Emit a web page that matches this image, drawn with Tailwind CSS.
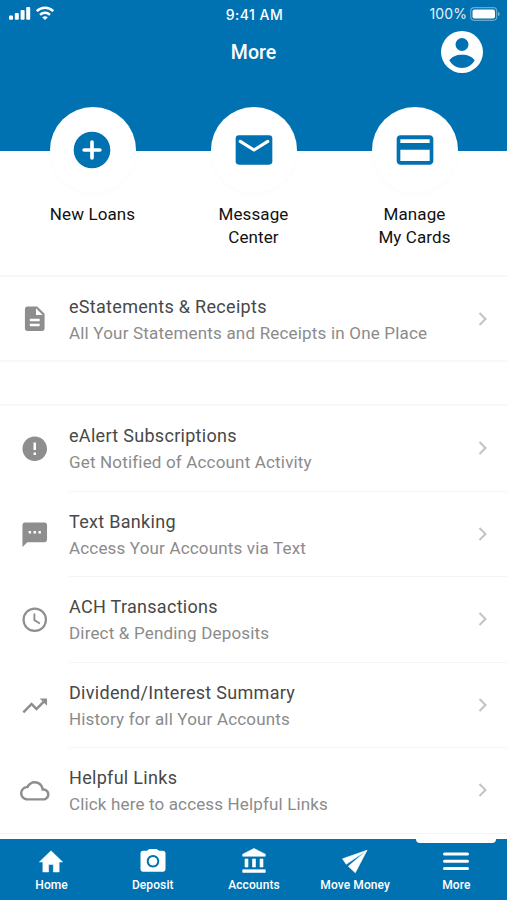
<!DOCTYPE html>
<html lang="en">
<head>
    <meta charset="UTF-8">
    <meta name="viewport" content="width=device-width, initial-scale=1.0">
    <title>More</title>
    <script src="https://cdn.jsdelivr.net/npm/@tailwindcss/browser@4"></script>
</head>
<body class="w-[507px] h-[900px] overflow-hidden bg-white font-['Roboto',sans-serif] flex flex-col">

    <header class="h-[151px] bg-[#0072b1] text-white shrink-0">
        <!-- Status bar -->
        <div class="h-7 grid grid-cols-3 items-center pl-[9px] pr-[7px] font-['Inter',sans-serif] text-[14px]">
            <div class="flex items-center gap-[5px] -mt-[2px]">
                <svg class="w-[22px] h-[14px]" viewBox="0 0 22 14" fill="currentColor">
                    <rect x="0" y="9.5" width="4" height="4.2" rx="1"/>
                    <rect x="5.8" y="7" width="4" height="6.7" rx="1"/>
                    <rect x="11.6" y="4" width="4" height="9.7" rx="1"/>
                    <rect x="17.2" y="1" width="4" height="12.7" rx="1"/>
                </svg>
                <svg class="w-[18px] h-[14px]" viewBox="0 0 18 14" fill="none" stroke="currentColor" stroke-width="2.4">
                    <path d="M.8 5.2C5.4.6 12.6.6 17.2 5.2"/>
                    <path d="M4 8.8c2.8-2.7 7.2-2.7 10 0"/>
                    <path d="M6.2 11.2c1.6-1.4 4-1.4 5.6 0L9 14z" fill="currentColor" stroke="none"/>
                </svg>
            </div>
            <div class="text-center font-medium tracking-[0.5px] whitespace-nowrap">9:41 AM</div>
            <div class="flex items-center justify-end gap-[3px] -mt-[1px]">
                <span class="text-[14px] tracking-[0.1px] opacity-90">100%</span>
                <svg class="w-[30px] h-[14px]" viewBox="0 0 30 14">
                    <rect x=".7" y=".7" width="26" height="12.6" rx="3.5" fill="none" stroke="#fff" stroke-opacity=".4" stroke-width="1.2"/>
                    <rect x="2.5" y="2.5" width="22.5" height="9" rx="2" fill="#fff"/>
                    <path d="M28 5c2 .5 2 3.500 0 4z" fill="#fff" fill-opacity=".5"/>
                </svg>
            </div>
        </div>
        <!-- Title bar -->
        <div class="grid grid-cols-[1fr_auto_1fr] items-center h-[50px]">
            <span></span>
            <h1 class="text-[19.5px] font-medium">More</h1>
            <svg class="w-[42px] h-[42px] justify-self-end mr-6 mt-[-2px]" viewBox="0 0 42 42">
                <circle cx="21" cy="21" r="21" fill="#fff"/>
                <circle cx="21" cy="13.5" r="6.5" fill="#0072b1"/>
                <path d="M8.3 29.5C10.5 25.5 15.5 23.7 21 23.7s10.5 1.8 12.7 5.8C31 34 26.5 37 21 37S11 34 8.3 29.5z" fill="#0072b1"/>
            </svg>
        </div>
    </header>

    <!-- Shortcuts -->
    <section class="grid grid-cols-3 px-[12px] -mt-[44px] h-[168px] shrink-0 text-center text-[17px] leading-[22.5px] tracking-[0.1px] text-[#111]">
        <div class="flex flex-col items-center">
            <div class="w-[86px] h-[86px] rounded-full bg-white flex items-center justify-center shadow-[0_2px_4px_rgba(0,0,0,0.02)]">
                <svg class="w-11 h-11 -ml-px" viewBox="0 0 24 24"><circle cx="12" cy="12" r="10" fill="#0072b1"/><path d="M12 7.7v8.6M7.7 12h8.6" stroke="#fff" stroke-width="2" stroke-linecap="round"/></svg>
            </div>
            <p class="mt-[10px]">New Loans</p>
        </div>
        <div class="flex flex-col items-center">
            <div class="w-[86px] h-[86px] rounded-full bg-white flex items-center justify-center shadow-[0_2px_4px_rgba(0,0,0,0.02)]">
                <svg class="w-11 h-11" viewBox="0 0 24 24"><rect x="2" y="4" width="20" height="16" rx="1.8" fill="#0072b1"/><path d="M4.5 7.3L12 12l7.5-4.7" fill="none" stroke="#fff" stroke-width="1.7" stroke-linecap="round"/></svg>
            </div>
            <p class="mt-[10px]">Message<br>Center</p>
        </div>
        <div class="flex flex-col items-center">
            <div class="w-[86px] h-[86px] rounded-full bg-white flex items-center justify-center shadow-[0_2px_4px_rgba(0,0,0,0.02)]">
                <svg class="w-11 h-11" viewBox="0 0 24 24" fill="#0072b1"><path d="M20 4H4c-1.11 0-1.99.89-1.99 2L2 18c0 1.110.89 2 2 2h16c1.110 0 2-.89 2-2V6c0-1.110-.89-2-2-2zm0 14H4v-6.200h16V18zm0-9.800H4V6.200h16v2z"/></svg>
            </div>
            <p class="mt-[10px]">Manage<br>My Cards</p>
        </div>
    </section>

    <!-- Menu list -->
    <main class="h-[563.5px] shrink-0 text-[18px] tracking-[0.3px] text-[#484848]">
        <a class="flex items-center h-[87px] border-y-2 border-[#f8f8f8] pl-5 pr-5">
            <svg class="w-[29.5px] h-[29.5px] mr-[19.5px]" viewBox="0 0 24 24" fill="#8e8e8e"><path d="M14 2H6c-1.100 0-1.990.9-1.990 2L4 20c0 1.100.89 2 1.990 2H18c1.100 0 2-.9 2-2V8l-6-6zm2 16H8v-2h8v2zm0-4H8v-2h8v2zm-3-5V3.500L18.500 9H13z"/></svg>
            <div class="flex-1 leading-[26px] pt-[3px]">
                <p>eStatements &amp; Receipts</p>
                <p class="text-[17px] tracking-[0.19px] text-[#8b8b8b]">All Your Statements and Receipts in One Place</p>
            </div>
            <svg class="w-[9px] h-[14px]" viewBox="0 0 9 14" fill="none" stroke="#c2c2c2" stroke-width="2"><path d="M1.500 1l6 6-6 6"/></svg>
        </a>
        <div class="h-[44px] border-b-2 border-[#f8f8f8]"></div>
        <a class="flex items-center h-[85.5px] pl-5">
            <svg class="w-[29.5px] h-[29.5px] mr-[19.5px]" viewBox="0 0 24 24" fill="#8e8e8e"><path d="M12 2C6.480 2 2 6.480 2 12s4.480 10 10 10 10-4.480 10-10S17.520 2 12 2zm1 15h-2v-2h2v2zm0-4h-2V7h2v6z"/></svg>
            <div class="flex-1 flex items-center h-full pr-5 border-b border-[#f4f4f4]">
                <div class="flex-1 leading-[26px] pt-[2px]">
                    <p>eAlert Subscriptions</p>
                    <p class="text-[17px] tracking-[0.17px] text-[#8b8b8b]">Get Notified of Account Activity</p>
                </div>
                <svg class="w-[9px] h-[14px]" viewBox="0 0 9 14" fill="none" stroke="#c2c2c2" stroke-width="2"><path d="M1.500 1l6 6-6 6"/></svg>
            </div>
        </a>
        <a class="flex items-center h-[85.5px] pl-5">
            <svg class="w-[29.5px] h-[29.5px] mr-[19.5px]" viewBox="0 0 24 24" fill="#8e8e8e"><path d="M20 2H4c-1.100 0-1.990.9-1.990 2L2 22l4-4h14c1.100 0 2-.9 2-2V4c0-1.100-.9-2-2-2zM9 11H7V9h2v2zm4 0h-2V9h2v2zm4 0h-2V9h2v2z"/></svg>
            <div class="flex-1 flex items-center h-full pr-5 border-b border-[#f4f4f4]">
                <div class="flex-1 leading-[26px] pt-[2px]">
                    <p>Text Banking</p>
                    <p class="text-[17px] tracking-[0.17px] text-[#8b8b8b]">Access Your Accounts via Text</p>
                </div>
                <svg class="w-[9px] h-[14px]" viewBox="0 0 9 14" fill="none" stroke="#c2c2c2" stroke-width="2"><path d="M1.500 1l6 6-6 6"/></svg>
            </div>
        </a>
        <a class="flex items-center h-[85.5px] pl-5">
            <svg class="w-[29.5px] h-[29.5px] mr-[19.5px]" viewBox="0 0 24 24" fill="none" stroke="#8e8e8e"><circle cx="12" cy="12" r="9.100" stroke-width="1.800"/><path d="M11.700 7v5.300l4.500 2.700" stroke-width="1.500"/></svg>
            <div class="flex-1 flex items-center h-full pr-5 border-b border-[#f4f4f4]">
                <div class="flex-1 leading-[26px] pt-[2px]">
                    <p>ACH Transactions</p>
                    <p class="text-[17px] tracking-[0.17px] text-[#8b8b8b]">Direct &amp; Pending Deposits</p>
                </div>
                <svg class="w-[9px] h-[14px]" viewBox="0 0 9 14" fill="none" stroke="#c2c2c2" stroke-width="2"><path d="M1.500 1l6 6-6 6"/></svg>
            </div>
        </a>
        <a class="flex items-center h-[85.5px] pl-5">
            <svg class="w-[29.5px] h-[29.5px] mr-[19.5px]" viewBox="0 0 24 24" fill="#8e8e8e"><path d="M16 6l2.290 2.290-4.880 4.880-4-4L2 16.590 3.410 18l6-6 4 4 6.300-6.290L22 12V6z"/></svg>
            <div class="flex-1 flex items-center h-full pr-5 border-b border-[#f4f4f4]">
                <div class="flex-1 leading-[26px] pt-[2px]">
                    <p>Dividend/Interest Summary</p>
                    <p class="text-[17px] tracking-[0.17px] text-[#8b8b8b]">History for all Your Accounts</p>
                </div>
                <svg class="w-[9px] h-[14px]" viewBox="0 0 9 14" fill="none" stroke="#c2c2c2" stroke-width="2"><path d="M1.500 1l6 6-6 6"/></svg>
            </div>
        </a>
        <a class="flex items-center h-[85.5px] pl-5 border-b border-[#f4f4f4]">
            <svg class="w-[29.5px] h-[29.5px] mr-[19.5px]" viewBox="0 0 24 24" fill="#8e8e8e"><path d="M19.350 10.040C18.670 6.590 15.640 4 12 4 9.110 4 6.600 5.640 5.350 8.040 2.340 8.360 0 10.910 0 14c0 3.310 2.690 6 6 6h13c2.760 0 5-2.240 5-5 0-2.640-2.050-4.780-4.650-4.960zM19 18H6c-2.210 0-4-1.790-4-4s1.790-4 4-4h.710C7.370 7.690 9.480 6 12 6c3.040 0 5.500 2.460 5.500 5.500v.5H19c1.660 0 3 1.340 3 3s-1.340 3-3 3z"/></svg>
            <div class="flex-1 flex items-center h-full pr-5">
                <div class="flex-1 leading-[26px] pt-[2px]">
                    <p>Helpful Links</p>
                    <p class="text-[17px] tracking-[0.15px] text-[#8b8b8b]">Click here to access Helpful Links</p>
                </div>
                <svg class="w-[9px] h-[14px]" viewBox="0 0 9 14" fill="none" stroke="#c2c2c2" stroke-width="2"><path d="M1.500 1l6 6-6 6"/></svg>
            </div>
        </a>
    </main>

    <!-- Tab bar -->
    <nav class="flex-1 grid grid-cols-5 pl-px bg-[#0072b1] text-white text-[12px] font-medium tracking-[0.1px] text-center">
        <a class="flex flex-col items-center pt-[8px]">
            <svg class="w-7 h-[30px] -ml-px" viewBox="0 0 24 24" preserveAspectRatio="none" fill="currentColor" stroke="currentColor" stroke-width=".4" stroke-linejoin="round"><path d="M10 20v-6h4v6h5v-8h3L12 3 2 12h3v8z"/></svg>
            <span class="leading-4">Home</span>
        </a>
        <a class="flex flex-col items-center pt-[8px]">
            <svg class="w-[30px] h-[30px]" viewBox="0 0 24 24" fill="currentColor"><circle cx="12" cy="11.400" r="3.400"/><path d="M9 1.500L7.170 3H4c-1.100 0-2 .9-2 2v12.700c0 1.100.9 2 2 2h16c1.100 0 2-.9 2-2V5c0-1.100-.9-2-2-2h-3.170L15 1.500H9zm3 14.900c-2.760 0-5-2.240-5-5s2.240-5 5-5 5 2.240 5 5-2.240 5-5 5z"/></svg>
            <span class="leading-4">Deposit</span>
        </a>
        <a class="flex flex-col items-center pt-[8px]">
            <svg class="w-[30px] h-[30px]" viewBox="0 0 30 30" fill="currentColor" stroke="currentColor" stroke-width=".6" stroke-linejoin="round"><path d="M15 1.500L3.700 7.200v2h22.600v-2zM6 12h3v8H6zM13.500 12h3v8h-3zM21 12h3v8h-3zM3.700 22.700h22.600v2.700H3.700z"/></svg>
            <span class="leading-4">Accounts</span>
        </a>
        <a class="flex flex-col items-center pt-[8px]">
            <svg class="w-[30px] h-[30px]" viewBox="0 0 30 30" fill="currentColor" stroke="currentColor" stroke-width=".6" stroke-linejoin="round"><path d="M27 3.300L2.500 11.800l3.700 5.500zM27 3.300L8.300 19.300l7 6.500z"/></svg>
            <span class="leading-4">Move Money</span>
        </a>
        <a class="flex flex-col items-center relative pt-[8px]">
            <span class="absolute top-0 left-[10px] w-[80px] h-1 bg-white rounded-b"></span>
            <svg class="w-[30px] h-[30px]" viewBox="0 0 30 30" stroke="currentColor" stroke-width="3" stroke-linecap="round"><path d="M3.500 7h23M3.500 14.200h23M3.500 21.500h23"/></svg>
            <span class="leading-4">More</span>
        </a>
    </nav>

</body>
</html>
